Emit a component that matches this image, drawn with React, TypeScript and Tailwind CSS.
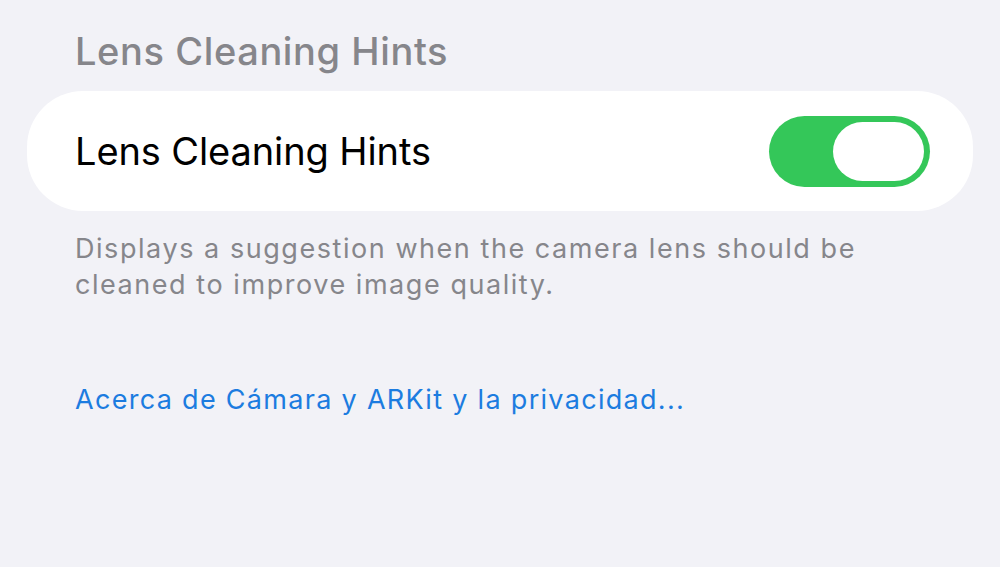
import React, { useState } from 'react'

const Toggle = ({ on, onChange }: { on: boolean; onChange: (v: boolean) => void }) => (
    <button
        type="button"
        onClick={() => onChange(!on)}
        className={`flex h-[71px] w-[161px] shrink-0 items-center rounded-full p-[6px] transition-colors ${
            on ? 'justify-end bg-[#34c759]' : 'justify-start bg-[#e9e9ea]'
        }`}
    >
        <span className="h-[59px] w-[91px] rounded-full bg-white" />
    </button>
)

export default function App() {
    const [hints, setHints] = useState(true)

    return (
        <div className="h-[567px] w-full overflow-hidden bg-[#f2f2f7] font-['Inter',sans-serif]">
            <div className="flex flex-col px-[27px] pt-[29px]">
                <h2 className="pl-[48px] text-[38px] font-medium leading-[44px] tracking-[0.6px] text-[#86868b]">
                    Lens Cleaning Hints
                </h2>
                <div className="mt-[18px] flex h-[120px] items-center justify-between rounded-[56px] bg-white pl-[48px] pr-[43px]">
                    <span className="text-[38px] leading-[44px] tracking-[-0.1px] text-black">Lens Cleaning Hints</span>
                    <Toggle on={hints} onChange={setHints} />
                </div>
                <p className="mt-[20px] pl-[48px] pr-[20px] text-[27px] leading-[36px] tracking-[1.55px] text-[#86868b]">
                    Displays a suggestion when the camera lens should be
                    <br />
                    cleaned to improve image quality.
                </p>
                <a href="#" className="mt-[79px] self-start pl-[48px] text-[27px] leading-[36px] tracking-[1.3px] text-[#1c7ce0]">
                    Acerca de Cámara y ARKit y la privacidad...
                </a>
            </div>
        </div>
    )
}
